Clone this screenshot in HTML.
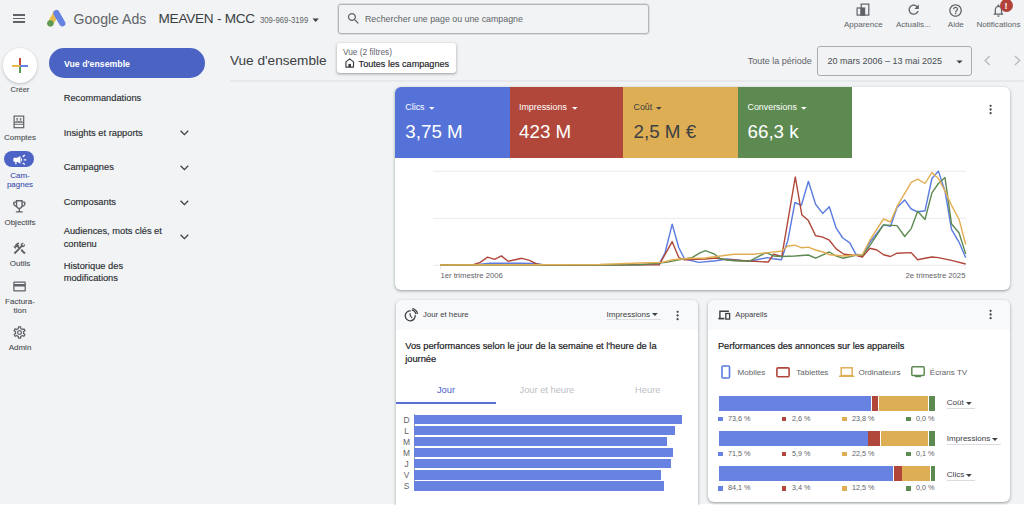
<!DOCTYPE html>
<html><head><meta charset="utf-8">
<style>
*{box-sizing:border-box;margin:0;padding:0}
html,body{width:1024px;height:505px;overflow:hidden;background:#f1f3f4;font-family:"Liberation Sans",sans-serif;color:#3c4043}
.a{position:absolute;white-space:nowrap;line-height:1}
.card{position:absolute;background:#fff;border-radius:6px;box-shadow:0 1px 2px rgba(60,64,67,.3),0 1px 3px 1px rgba(60,64,67,.15)}
svg{position:absolute;overflow:visible}
.nav{font-size:9.3px;color:#2b2e32;-webkit-text-stroke:0.15px #2b2e32}
.side{font-size:8px;color:#4a4e53;-webkit-text-stroke:0.1px #4a4e53;text-align:center;width:40px;left:0}
</style></head><body>
<!-- bottom white strip -->
<div class="a" style="left:0;top:504px;width:1024px;height:1px;background:#fff"></div>

<!-- TOP BAR -->
<div class="a" style="left:13px;top:14px;width:12px;height:1.6px;background:#5f6368"></div>
<div class="a" style="left:13px;top:17.7px;width:12px;height:1.6px;background:#5f6368"></div>
<div class="a" style="left:13px;top:21.4px;width:12px;height:1.6px;background:#5f6368"></div>

<svg style="left:47px;top:9px" width="20" height="18" viewBox="0 0 20 18">
  <line x1="9.4" y1="4.1" x2="3.4" y2="14.3" stroke="#e6bc4e" stroke-width="6" stroke-linecap="round"/>
  <line x1="9.4" y1="4.1" x2="15.3" y2="14.3" stroke="#6382e2" stroke-width="6.2" stroke-linecap="round"/>
  <circle cx="3.4" cy="14.35" r="3.2" fill="#5c9c57"/>
</svg>
<div class="a" style="left:73.5px;top:11.5px;font-size:14.1px;color:#5f6368">Google Ads</div>
<div class="a" style="left:158.5px;top:11.5px;font-size:13.6px;color:#3a3d41;letter-spacing:-0.25px">MEAVEN - MCC</div>
<div class="a" style="left:260.4px;top:15.7px;font-size:8.8px;color:#5f6368;transform:scaleX(.88);transform-origin:0 0">309-969-3199</div>
<svg style="left:312px;top:17.5px" width="8" height="5"><path d="M0.5 0.5 L6.8 0.5 L3.65 4 Z" fill="#3c4043"/></svg>

<!-- search -->
<div class="a" style="left:338.3px;top:3.8px;width:310.5px;height:30.2px;border:1px solid #b3b5b8;border-radius:3px;box-shadow:0 0 0 0.7px rgba(190,192,196,.6)"></div>
<svg style="left:346.0px;top:10.8px" width="15" height="15" viewBox="0 0 24 24"><path d="M15.5 14h-.79l-.28-.27C15.41 12.59 16 11.11 16 9.5 16 5.91 13.09 3 9.5 3S3 5.910 3 9.5 5.91 16 9.5 16c1.61 0 3.09-.59 4.23-1.57l.27.28v.79l5 4.99L20.49 19l-4.99-5zm-6 0C7.01 14 5 11.99 5 9.5S7.01 5 9.5 5 14 7.01 14 9.5 11.99 14 9.5 14z" fill="#5f6368"/></svg>
<div class="a" style="left:364.8px;top:13.5px;font-size:9.8px;color:#5f6368;transform:scaleX(.9);transform-origin:0 0">Rechercher une page ou une campagne</div>

<!-- right icons -->
<svg style="left:855.6px;top:3.4px" width="14" height="13" viewBox="0 0 14 13"><rect x="5.2" y="1.1" width="7.6" height="11" fill="none" stroke="#5f6368" stroke-width="1.2"/><rect x="1.1" y="5" width="4.1" height="7.1" fill="none" stroke="#5f6368" stroke-width="1.2"/><rect x="4.6" y="4.4" width="4.6" height="8.3" fill="#5f6368"/></svg>
<div class="a" style="left:844px;top:20.8px;font-size:8px;color:#5f6368">Apparence</div>
<svg style="left:905.6px;top:2.3px" width="15.4" height="15.4" viewBox="0 0 24 24"><path d="M17.65 6.35C16.2 4.9 14.21 4 12 4c-4.42 0-7.99 3.58-7.99 8s3.57 8 7.99 8c3.73 0 6.84-2.55 7.73-6h-2.08c-.82 2.33-3.04 4-5.65 4-3.31 0-6-2.690-6-6s2.69-6 6-6c1.66 0 3.14.69 4.22 1.78L13 11h7V4l-2.35 2.35z" fill="#5f6368"/></svg>
<div class="a" style="left:896px;top:20.8px;font-size:8px;color:#5f6368">Actualis...</div>
<svg style="left:948.1px;top:2.5px" width="15.1" height="15.1" viewBox="0 0 24 24"><path d="M11 18h2v-2h-2v2zm1-16C6.48 2 2 6.48 2 12s4.48 10 10 10 10-4.48 10-10S17.52 2 12 2zm0 18c-4.41 0-8-3.59-8-8s3.59-8 8-8 8 3.59 8 8-3.59 8-8 8zm0-14c-2.21 0-4 1.79-4 4h2c0-1.1.9-2 2-2s2 .9 2 2c0 2-3 1.75-3 5h2c0-2.25 3-2.5 3-5 0-2.21-1.79-4-4-4z" fill="#5f6368"/></svg>
<div class="a" style="left:947.8px;top:20.8px;font-size:8px;color:#5f6368">Aide</div>
<svg style="left:991.4px;top:2.8px" width="14.9" height="14.9" viewBox="0 0 24 24"><path d="M12 22c1.1 0 2-.9 2-2h-4c0 1.1.89 2 2 2zm6-6v-5c0-3.07-1.64-5.64-4.5-6.32V4c0-.83-.67-1.5-1.5-1.5s-1.5.67-1.5 1.5v.68C7.63 5.36 6 7.92 6 11v5l-2 2v1h16v-1l-2-2zm-2 1H8v-6c0-2.48 1.51-4.5 4-4.5s4 2.02 4 4.5v6z" fill="#5f6368"/></svg>
<div class="a" style="left:999.5px;top:-1px;width:13px;height:13px;border-radius:50%;background:#b3413a"></div>
<div class="a" style="left:999.5px;top:1.5px;width:13px;text-align:center;font-size:9px;font-weight:700;color:#fff">!</div>
<div class="a" style="left:976.4px;top:20.8px;font-size:8.1px;color:#5f6368">Notifications</div>

<!-- SIDEBAR rail -->
<div class="a" style="left:2.6px;top:48.3px;width:34.6px;height:34.6px;border-radius:50%;background:#fff;box-shadow:0 1px 3px rgba(60,64,67,.3)"></div>
<div class="a" style="left:12.1px;top:64.5px;width:8px;height:2.3px;background:#e8b84a"></div>
<div class="a" style="left:20px;top:64.5px;width:7.6px;height:2.3px;background:#6281e3"></div>
<div class="a" style="left:18.8px;top:57.8px;width:2.3px;height:7.2px;background:#c5483d"></div>
<div class="a" style="left:18.8px;top:66.8px;width:2.3px;height:6.3px;background:#5a9a55"></div>
<div class="a side" style="top:86px;font-size:7.5px">Créer</div>

<svg style="left:13.4px;top:115.2px" width="12" height="14" viewBox="0 0 12 14"><rect x="1.1" y="1.1" width="9.6" height="11.6" fill="none" stroke="#5f6368" stroke-width="1.2"/><circle cx="4.2" cy="3.9" r="0.9" fill="#5f6368"/><circle cx="7.6" cy="3.9" r="0.9" fill="#5f6368"/><path d="M2.6 6.6 Q4.2 5.2 5.8 6.6 M6 6.6 Q7.6 5.2 9.2 6.6" fill="none" stroke="#5f6368" stroke-width="1"/><path d="M1.1 7.3 L10.7 7.3 M1.1 9.3 L10.7 9.3" stroke="#5f6368" stroke-width="0.9"/></svg>
<div class="a side" style="top:133.6px">Comptes</div>

<div class="a" style="left:4.4px;top:151.2px;width:29.7px;height:16.3px;border-radius:9px;background:#4d63c6"></div>
<svg style="left:11.6px;top:152.3px" width="15.6" height="15.6" viewBox="0 0 24 24"><path d="M18 11v2h4v-2h-4zm-2 6.61c.96.71 2.21 1.65 3.2 2.39.4-.53.8-1.07 1.2-1.6-.99-.74-2.24-1.68-3.2-2.4-.4.54-.8 1.08-1.2 1.61zM20.4 5.6c-.4-.53-.8-1.07-1.2-1.6-.99.74-2.24 1.68-3.2 2.4.4.53.8 1.07 1.2 1.6.96-.72 2.21-1.65 3.2-2.4zM4 9c-1.1 0-2 .9-2 2v2c0 1.1.9 2 2 2h1v4h2v-4h1l5 3V6L8 9H4zm11.5 3c0-1.33-.58-2.53-1.5-3.35v6.69c.92-.81 1.5-2.01 1.5-3.34z" fill="#fff"/></svg>
<div class="a side" style="top:170.6px;color:#3f51b0;-webkit-text-stroke:0.1px #3f51b0;line-height:9px">Cam-<br>pagnes</div>

<svg style="left:10.9px;top:198.0px" width="16.6" height="16.6" viewBox="0 0 24 24"><path d="M19 5h-2V3H7v2H5c-1.1 0-2 .9-2 2v1c0 2.55 1.92 4.63 4.39 4.94.63 1.5 1.98 2.63 3.61 2.96V19H7v2h10v-2h-4v-3.1c1.63-.33 2.98-1.46 3.61-2.96C19.08 12.63 21 10.55 21 8V7c0-1.1-.9-2-2-2zM5 8V7h2v3.82C5.84 10.4 5 9.3 5 8zm7 6c-1.65 0-3-1.35-3-3V5h6v6c0 1.650-1.35 3-3 3zm7-6c0 1.3-.84 2.4-2 2.82V7h2v1z" fill="#5f6368"/></svg>
<div class="a side" style="top:218.5px">Objectifs</div>

<svg style="left:12.1px;top:240.7px" width="14.9" height="14.9" viewBox="0 0 24 24"><path d="M13.783 15.172l2.121-2.121 5.996 5.996-2.121 2.121zM17.5 10c1.93 0 3.5-1.57 3.5-3.5 0-.58-.16-1.12-.41-1.6l-2.7 2.7-1.49-1.49 2.7-2.7c-.48-.25-1.02-.41-1.6-.41C15.57 3 14 4.57 14 6.5c0 .41.08.8.21 1.16l-1.85 1.850-1.78-1.78.71-.71-1.41-1.41L12 3.49c-1.17-1.17-3.07-1.17-4.24 0L4.22 7.03l1.41 1.41H2.81l-.71.71 3.54 3.54.71-.71V9.150l1.41 1.41.71-.71 1.78 1.78-7.41 7.41 2.12 2.12L16.34 9.79c.36.13.75.21 1.16.21z" fill="#5f6368"/></svg>
<div class="a side" style="top:260.1px">Outils</div>

<svg style="left:11.9px;top:278.6px" width="15.1" height="15.1" viewBox="0 0 24 24"><path d="M20 4H4c-1.11 0-1.99.89-1.99 2L2 18c0 1.11.89 2 2 2h16c1.11 0 2-.89 2-2V6c0-1.11-.89-2-2-2zm0 14H4v-6h16v6zm0-10H4V6h16v2z" fill="#5f6368"/></svg>
<div class="a side" style="top:296.6px;line-height:9px">Factura-<br>tion</div>

<svg style="left:11.9px;top:325.2px" width="15.1" height="15.1" viewBox="0 0 24 24"><path d="M19.43 12.98c.04-.32.07-.64.07-.98 0-.34-.03-.66-.07-.98l2.11-1.65c.19-.15.24-.42.12-.64l-2-3.46c-.09-.16-.26-.25-.44-.25-.06 0-.12.01-.17.03l-2.49 1c-.52-.4-1.08-.73-1.69-.98l-.38-2.65C14.46 2.18 14.25 2 14 2h-4c-.25 0-.46.18-.49.42l-.38 2.65c-.61.25-1.17.59-1.69.98l-2.49-1c-.06-.02-.12-.03-.18-.03-.17 0-.34.09-.43.25l-2 3.46c-.13.22-.07.49.12.64l2.11 1.65c-.04.32-.07.65-.07.98 0 .33.03.66.07.98l-2.11 1.65c-.19.15-.24.42-.12.64l2 3.46c.09.16.26.25.44.25.06 0 .12-.01.17-.03l2.49-1c.52.4 1.08.73 1.69.98l.38 2.65c.03.24.24.42.49.42h4c.25 0 .46-.18.49-.42l.38-2.65c.61-.25 1.17-.59 1.69-.98l2.49 1c.06.02.12.03.18.03.17 0 .34-.09.43-.25l2-3.46c.12-.22.07-.49-.12-.64l-2.11-1.65zm-1.98-1.71c.04.31.05.52.05.73 0 .21-.02.43-.05.73l-.14 1.13.89.7 1.08.84-.7 1.21-1.27-.51-1.04-.42-.9.68c-.43.32-.84.56-1.25.73l-1.060.43-.16 1.13-.2 1.35h-1.4l-.19-1.35-.16-1.13-1.06-.43c-.43-.18-.83-.41-1.23-.71l-.91-.7-1.06.43-1.27.51-.7-1.21 1.08-.84.89-.7-.14-1.13c-.03-.31-.05-.54-.05-.74s.02-.43.05-.73l.14-1.13-.89-.7-1.08-.84.7-1.21 1.27.51 1.04.42.9-.68c.43-.32.84-.56 1.25-.73l1.06-.43.16-1.13.2-1.35h1.39l.19 1.35.16 1.13 1.06.43c.43.18.83.41 1.23.71l.91.7 1.06-.43 1.27-.51.7 1.21-1.07.85-.89.7.14 1.13zM12 8c-2.21 0-4 1.79-4 4s1.79 4 4 4 4-1.79 4-4-1.79-4-4-4zm0 6c-1.1 0-2-.9-2-2s.9-2 2-2 2 .9 2 2-.9 2-2 2z" fill="#5f6368"/></svg>
<div class="a side" style="top:344.3px">Admin</div>

<!-- NAV MENU -->
<div class="a" style="left:48.8px;top:47.9px;width:156.4px;height:29.9px;border-radius:15px;background:#4b64c4"></div>
<div class="a" style="left:64px;top:59.7px;font-size:8.75px;font-weight:700;color:#fff">Vue d'ensemble</div>
<div class="a nav" style="left:63.7px;top:94px">Recommandations</div>
<div class="a nav" style="left:63.7px;top:128.5px">Insights et rapports</div>
<div class="a nav" style="left:63.7px;top:163.3px">Campagnes</div>
<div class="a nav" style="left:63.7px;top:198px">Composants</div>
<div class="a nav" style="left:63.7px;top:225.1px;line-height:12.45px">Audiences, mots clés et<br>contenu</div>
<div class="a nav" style="left:63.7px;top:259.7px;line-height:12.45px">Historique des<br>modifications</div>
<svg style="left:180px;top:130px" width="9" height="6"><path d="M0.6 0.8 L4.4 4.6 L8.2 0.8" fill="none" stroke="#3c4043" stroke-width="1.3"/></svg>
<svg style="left:180px;top:164.8px" width="9" height="6"><path d="M0.6 0.8 L4.4 4.6 L8.2 0.8" fill="none" stroke="#3c4043" stroke-width="1.3"/></svg>
<svg style="left:180px;top:199.5px" width="9" height="6"><path d="M0.6 0.8 L4.4 4.6 L8.2 0.8" fill="none" stroke="#3c4043" stroke-width="1.3"/></svg>
<svg style="left:180.4px;top:234.3px" width="9" height="6"><path d="M0.6 0.8 L4.4 4.6 L8.2 0.8" fill="none" stroke="#3c4043" stroke-width="1.3"/></svg>

<!-- SECOND ROW -->
<div class="a" style="left:230px;top:54px;font-size:13.6px;color:#3c4043">Vue d'ensemble</div>
<div class="card" style="left:337px;top:43.4px;width:118.6px;height:30px;border-radius:3px"></div>
<div class="a" style="left:343px;top:47.5px;font-size:8.3px;color:#5f6368">Vue (2 filtres)</div>
<svg style="left:345px;top:58.3px" width="10" height="10" viewBox="0 0 10 10"><path d="M0.9 9.1 L0.9 3.9 L4.7 0.9 L8.5 3.9 L8.5 9.1 Z" fill="none" stroke="#3c4043" stroke-width="1.2" stroke-linejoin="round"/><rect x="3.4" y="5.9" width="2.6" height="3.2" fill="#3c4043"/></svg>
<div class="a" style="left:358.6px;top:59.5px;font-size:9.1px;color:#202124;-webkit-text-stroke:0.15px #202124">Toutes les campagnes</div>

<div class="a" style="left:747.8px;top:57px;font-size:9px;color:#5f6368">Toute la période</div>
<div class="a" style="left:817px;top:46.3px;width:154.6px;height:29.5px;border:1px solid #a9acb0;border-radius:3px"></div>
<div class="a" style="left:827.4px;top:57px;font-size:9px;color:#4a4e53">20 mars 2006 – 13 mai 2025</div>
<svg style="left:956px;top:60px" width="8" height="5"><path d="M0.4 0.4 L6.6 0.4 L3.5 3.6 Z" fill="#3c4043"/></svg>
<svg style="left:984px;top:55px" width="8" height="12"><path d="M5.8 0.9 L1 5.5 L5.8 10.1" fill="none" stroke="#b9bbbe" stroke-width="1.4"/></svg>
<svg style="left:1013.6px;top:55px" width="8" height="12"><path d="M0.9 0.9 L5.7 5.5 L0.9 10.1" fill="none" stroke="#b9bbbe" stroke-width="1.4"/></svg>
<div class="a" style="left:230px;top:80px;width:794px;height:2px;background:#e7e8eb"></div>

<!-- MAIN CHART CARD -->
<div class="card" style="left:395.2px;top:86.9px;width:615.2px;height:203.4px;overflow:hidden">
  <div class="a" style="left:0;top:0;width:114.6px;height:71.6px;background:#5472d7"></div>
  <div class="a" style="left:114.6px;top:0;width:113.7px;height:71.6px;background:#b0473a"></div>
  <div class="a" style="left:228.3px;top:0;width:114.2px;height:71.6px;background:#ddae54"></div>
  <div class="a" style="left:342.5px;top:0;width:114px;height:71.6px;background:#5d8a51"></div>
</div>
<div class="a" style="left:405.3px;top:103.3px;font-size:8.9px;color:#fff">Clics</div>
<div class="a" style="left:405.3px;top:122.5px;font-size:18.8px;color:#fff">3,75 M</div>
<div class="a" style="left:519px;top:103.3px;font-size:8.9px;color:#fff">Impressions</div>
<div class="a" style="left:519px;top:122.5px;font-size:18.8px;color:#fff">423 M</div>
<div class="a" style="left:633.5px;top:103.3px;font-size:8.9px;color:#3c4043">Coût</div>
<div class="a" style="left:633.5px;top:122.5px;font-size:18.8px;color:#3c4043">2,5 M €</div>
<div class="a" style="left:747.5px;top:103.3px;font-size:8.9px;color:#fff">Conversions</div>
<div class="a" style="left:747.5px;top:122.5px;font-size:18.8px;color:#fff">66,3 k</div>
<svg style="left:429.4px;top:106.6px" width="7" height="4"><path d="M0 0 L5.6 0 L2.8 2.8 Z" fill="#fff"/></svg>
<svg style="left:572px;top:106.6px" width="7" height="4"><path d="M0 0 L5.6 0 L2.8 2.8 Z" fill="#fff"/></svg>
<svg style="left:656px;top:106.6px" width="7" height="4"><path d="M0 0 L5.6 0 L2.8 2.8 Z" fill="#3c4043"/></svg>
<svg style="left:800.5px;top:106.6px" width="7" height="4"><path d="M0 0 L5.6 0 L2.8 2.8 Z" fill="#fff"/></svg>
<svg style="left:988.7px;top:104px" width="4" height="12"><circle cx="1.6" cy="1.8" r="1.15" fill="#45494e"/><circle cx="1.6" cy="5.5" r="1.15" fill="#45494e"/><circle cx="1.6" cy="9.2" r="1.15" fill="#45494e"/></svg>

<!-- chart -->
<svg id="chart" style="left:0;top:0" width="1024" height="505">
  <line x1="433" y1="171.3" x2="966" y2="171.3" stroke="#e8eaed" stroke-width="1"/>
  <line x1="433" y1="218.3" x2="966" y2="218.3" stroke="#e8eaed" stroke-width="1"/>
  <line x1="433" y1="265.3" x2="966" y2="265.3" stroke="#e8eaed" stroke-width="1"/>
  <line x1="440.5" y1="265" x2="440.5" y2="269" stroke="#e3e5e8" stroke-width="1"/>
  <line x1="965.5" y1="265" x2="965.5" y2="269" stroke="#eceef0" stroke-width="1"/>
  <g fill="none" stroke-width="1.4" stroke-linejoin="round">
  <polyline stroke="#5b7be0" points="440,265 478,264.5 490,263.3 520,263.3 535,263.5 545,265 640,264.5 659.2,264 665,253 672.2,224.2 678.8,247.7 684.6,259 698.8,262.4 716,260.8 727,259 742,260.4 751,261 767.4,257.6 773,258.7 781.4,259.8 787.9,240.2 794.9,202.5 801.4,205.3 808.4,181.3 815.6,204.2 822.7,213.4 829.3,206.8 836.2,228.2 842.8,238 849.8,242.8 855.9,254.3 862.4,255.4 869.8,242.3 883.5,224.9 890.5,226.4 897,207.5 904.7,199.9 911.2,209 917.7,211.8 925,210.8 931.9,178.5 938.4,171.1 945,191.1 951.5,229.3 959.1,242.3 965.7,257.6"/>
  <polyline stroke="#b0473a" points="440,265 472.6,265 480.1,262.4 487.6,257.2 494.6,259.4 501.4,255.9 508,261.3 522,258.3 529.5,260.4 536,263.7 541.3,265 659.2,264.8 672.2,241.7 678.8,257.6 684.6,259.8 705,259 716,258 727,259.8 749,261 766,262 768.3,262 773.5,254.3 781.8,256.5 795.3,177 801.8,214.7 808.4,220.6 815.6,235.8 822,236.9 829.3,240.2 836.2,248.9 843.9,254.3 855.9,255.4 862.4,257 869.8,248.2 877,250 883.5,254.8 890.5,256.5 897,253.2 911.2,252.6 917.7,259.8 925,258.2 931.9,257 938.4,257.6 951.5,260.4 965.7,264"/>
  <polyline stroke="#5d8a51" points="440,265 600,265 640,264.8 666,262.4 679,259.8 692,257.6 700,252.8 705.4,250.6 714,253.8 720.6,259 733.7,260.8 749,261.3 766,252.6 774,256 781.8,256.5 794.9,256 808.4,255 815.6,258.2 829.3,252 836.2,256 842.8,258.2 855.9,255.4 862.4,255.4 869.8,245.6 883.5,224.9 897,225.6 904.7,236.5 911.2,228.6 917.7,211.2 925,219.5 931.9,192.9 938.4,183.5 945,177.6 951.5,223.8 959.1,233 965.7,253.9"/>
  <polyline stroke="#e3ae52" points="440,265 600,264.5 640,263 661.8,262.4 672.7,259.8 683.6,258.7 705,258 733.7,254.3 753,254.3 768.5,252.6 781.8,251 787.9,246 794.9,245.2 801.8,247.8 808.4,247.1 815.6,250 823.2,252 829.7,254.8 842.8,256 862.4,254.8 869.8,240.2 883.5,219 890.5,222 897,206.4 911.2,182.4 917.7,179.2 925,183.5 931.9,172.6 938.4,178.5 945,191.1 951.5,205.3 959.1,219.5 965.7,244.5"/>
  </g>
</svg>
<div class="a" style="left:440.4px;top:271.5px;font-size:7.7px;color:#5f6368">1er trimestre 2006</div>
<div class="a" style="left:905.6px;top:271.5px;font-size:7.7px;color:#5f6368">2e trimestre 2025</div>

<!-- JOUR ET HEURE CARD -->
<div class="card" style="left:395.7px;top:300px;width:302.4px;height:230px;overflow:hidden">
  <div class="a" style="left:0;top:0;width:100%;height:29.5px;background:#f8f9fa"></div>
</div>
<svg style="left:404px;top:308px" width="16" height="15" viewBox="0 0 16 15"><path d="M6.6 2.8 A5 5 0 1 0 11.2 7.2" fill="none" stroke="#3c4043" stroke-width="1.3"/><path d="M5.9 5.2 Q5.9 8.6 8.2 9.9" fill="none" stroke="#3c4043" stroke-width="1.2"/><path d="M7.7 2.2 A4.9 4.9 0 0 1 11.9 6.2 M8.4 0.6 A6.7 6.7 0 0 1 13.6 5.8" fill="none" stroke="#3c4043" stroke-width="1.2"/></svg>
<div class="a" style="left:423px;top:311px;font-size:7.75px;color:#3c4043">Jour et heure</div>
<div class="a" style="left:606.6px;top:310.8px;font-size:8.05px;color:#3c4043">Impressions</div>
<svg style="left:652.2px;top:312.7px" width="7" height="4"><path d="M0 0 L5.8 0 L2.9 2.9 Z" fill="#3c4043"/></svg>
<div class="a" style="left:606.6px;top:319px;width:54px;height:1px;background:#dadce0"></div>
<svg style="left:676.3px;top:310.2px" width="4" height="12"><circle cx="1.6" cy="1.8" r="1.15" fill="#45494e"/><circle cx="1.6" cy="5.5" r="1.15" fill="#45494e"/><circle cx="1.6" cy="9.2" r="1.15" fill="#45494e"/></svg>
<div class="a" style="left:405.2px;top:341.6px;font-size:9.3px;color:#202124;-webkit-text-stroke:0.2px #202124">Vos performances selon le jour de la semaine et l'heure de la</div>
<div class="a" style="left:405.2px;top:354.5px;font-size:9.3px;color:#202124;-webkit-text-stroke:0.2px #202124">journée</div>
<div class="a" style="left:436.9px;top:385.8px;font-size:9.3px;color:#4b5fc9">Jour</div>
<div class="a" style="left:519.5px;top:385.8px;font-size:9.3px;color:#bdc1c6">Jour et heure</div>
<div class="a" style="left:635.1px;top:385.8px;font-size:9.3px;color:#bdc1c6">Heure</div>
<div class="a" style="left:395.7px;top:402.4px;width:100.7px;height:2px;background:#5a6fd3"></div>


<div class="a" style="left:414px;top:414.2px;width:0.8px;height:77px;background:#9aa0a6"></div>
<div class="a" style="left:414.2px;top:414.7px;width:267.4px;height:9.4px;background:#6882e2"></div>
<div class="a" style="left:414.2px;top:425.8px;width:260.4px;height:9.4px;background:#6882e2"></div>
<div class="a" style="left:414.2px;top:436.9px;width:252.6px;height:9.4px;background:#6882e2"></div>
<div class="a" style="left:414.2px;top:448px;width:258.6px;height:9.4px;background:#6882e2"></div>
<div class="a" style="left:414.2px;top:459.1px;width:256.8px;height:9.4px;background:#6882e2"></div>
<div class="a" style="left:414.2px;top:470.2px;width:246.5px;height:9.4px;background:#6882e2"></div>
<div class="a" style="left:414.2px;top:481.3px;width:250.2px;height:9.4px;background:#6882e2"></div>
<div class="a" style="left:401.5px;top:414.5px;width:10px;text-align:center;font-size:8.4px;color:#5f6368;line-height:11.1px">D<br>L<br>M<br>M<br>J<br>V<br>S</div>

<!-- APPAREILS CARD -->
<div class="card" style="left:707.9px;top:300.3px;width:302.3px;height:201.7px;overflow:hidden">
  <div class="a" style="left:0;top:0;width:100%;height:29.5px;background:#f8f9fa"></div>
</div>
<svg style="left:717.5px;top:309.6px" width="13" height="10" viewBox="0 0 13 10"><path d="M1.9 8.2 L1.9 1.3 L10.9 1.3" fill="none" stroke="#3c4043" stroke-width="1.4"/><path d="M0.4 8.6 L6.4 8.6" stroke="#3c4043" stroke-width="1.7"/><rect x="7.8" y="3.5" width="3.8" height="5.6" fill="none" stroke="#3c4043" stroke-width="1.3"/></svg>
<div class="a" style="left:735.3px;top:311px;font-size:7.7px;color:#3c4043">Appareils</div>
<svg style="left:988.8px;top:309.2px" width="4" height="12"><circle cx="1.6" cy="1.8" r="1.15" fill="#45494e"/><circle cx="1.6" cy="5.5" r="1.15" fill="#45494e"/><circle cx="1.6" cy="9.2" r="1.15" fill="#45494e"/></svg>
<div class="a" style="left:717.9px;top:341.6px;font-size:9.2px;color:#202124;-webkit-text-stroke:0.2px #202124">Performances des annonces sur les appareils</div>

<svg style="left:720.5px;top:364.5px" width="10" height="14"><rect x="1" y="1" width="7.5" height="12" rx="1" fill="none" stroke="#5b7be0" stroke-width="1.6"/></svg>
<div class="a" style="left:737.6px;top:368.5px;font-size:8.05px;color:#5f6368">Mobiles</div>
<svg style="left:776px;top:366.5px" width="15" height="11"><rect x="0.9" y="0.9" width="12.2" height="8.8" rx="1" fill="none" stroke="#b0473a" stroke-width="1.6"/></svg>
<div class="a" style="left:796.2px;top:368.5px;font-size:8.05px;color:#5f6368">Tablettes</div>
<svg style="left:838.5px;top:367px" width="16" height="11"><rect x="2.2" y="0.8" width="11" height="7.8" fill="none" stroke="#ddae54" stroke-width="1.5"/><rect x="0" y="8.6" width="15.4" height="1.4" fill="#ddae54"/></svg>
<div class="a" style="left:858.4px;top:368.5px;font-size:8.05px;color:#5f6368">Ordinateurs</div>
<svg style="left:910.5px;top:366px" width="15" height="12"><rect x="0.8" y="0.8" width="12.4" height="8.8" rx="1" fill="none" stroke="#5d8a51" stroke-width="1.5"/><rect x="4" y="10" width="6" height="1.2" fill="#5d8a51"/></svg>
<div class="a" style="left:929.8px;top:368.5px;font-size:8.05px;color:#5f6368">Écrans TV</div>

<!-- stacked bars -->
<div class="a" style="left:718.6px;top:396.4px;height:14.8px;width:216.3px;background:#fff">
  <div class="a" style="left:0;top:0;height:100%;width:152.6px;background:#6882e2"></div>
  <div class="a" style="left:153.1px;top:0;height:100%;width:6.6px;background:#b0473a"></div>
  <div class="a" style="left:160.2px;top:0;height:100%;width:49.3px;background:#ddae54"></div>
  <div class="a" style="left:210px;top:0;height:100%;width:6.3px;background:#5d8a51"></div>
</div>
<div class="a" style="left:718.6px;top:431.4px;height:14.8px;width:216.3px;background:#fff">
  <div class="a" style="left:0;top:0;height:100%;width:149px;background:#6882e2"></div>
  <div class="a" style="left:149.5px;top:0;height:100%;width:12px;background:#b0473a"></div>
  <div class="a" style="left:162px;top:0;height:100%;width:47.5px;background:#ddae54"></div>
  <div class="a" style="left:210px;top:0;height:100%;width:6.3px;background:#5d8a51"></div>
</div>
<div class="a" style="left:718.6px;top:466px;height:14.8px;width:216.3px;background:#fff">
  <div class="a" style="left:0;top:0;height:100%;width:174.7px;background:#6882e2"></div>
  <div class="a" style="left:175.2px;top:0;height:100%;width:8.2px;background:#b0473a"></div>
  <div class="a" style="left:183.9px;top:0;height:100%;width:27.8px;background:#ddae54"></div>
  <div class="a" style="left:212.2px;top:0;height:100%;width:4.1px;background:#5d8a51"></div>
</div>
<div class="a" style="left:718.0px;top:416.6px;width:4.6px;height:4.6px;background:#6882e2"></div>
<div class="a" style="left:727.6px;top:415.1px;font-size:8px;color:#5f6368;transform:scaleX(.9);transform-origin:0 0">73,6 %</div>
<div class="a" style="left:781.6px;top:416.6px;width:4.6px;height:4.6px;background:#b0473a"></div>
<div class="a" style="left:791.8px;top:415.1px;font-size:8px;color:#5f6368;transform:scaleX(.9);transform-origin:0 0">2,6 %</div>
<div class="a" style="left:842.2px;top:416.6px;width:4.6px;height:4.6px;background:#ddae54"></div>
<div class="a" style="left:852.0px;top:415.1px;font-size:8px;color:#5f6368;transform:scaleX(.9);transform-origin:0 0">23,8 %</div>
<div class="a" style="left:906.3px;top:416.6px;width:4.6px;height:4.6px;background:#5d8a51"></div>
<div class="a" style="left:915.8px;top:415.1px;font-size:8px;color:#5f6368;transform:scaleX(.9);transform-origin:0 0">0,0 %</div>
<div class="a" style="left:946.8px;top:398.8px;font-size:8.05px;color:#3c4043">Coût</div>
<svg style="left:966.3px;top:402.3px" width="7" height="4"><path d="M0 0 L5.8 0 L2.9 2.9 Z" fill="#3c4043"/></svg>
<div class="a" style="left:946.8px;top:407.8px;width:27.8px;height:1px;background:#dadce0"></div>
<div class="a" style="left:718.0px;top:451.6px;width:4.6px;height:4.6px;background:#6882e2"></div>
<div class="a" style="left:727.6px;top:449.6px;font-size:8px;color:#5f6368;transform:scaleX(.9);transform-origin:0 0">71,5 %</div>
<div class="a" style="left:781.6px;top:451.6px;width:4.6px;height:4.6px;background:#b0473a"></div>
<div class="a" style="left:791.8px;top:449.6px;font-size:8px;color:#5f6368;transform:scaleX(.9);transform-origin:0 0">5,9 %</div>
<div class="a" style="left:842.2px;top:451.6px;width:4.6px;height:4.6px;background:#ddae54"></div>
<div class="a" style="left:852.0px;top:449.6px;font-size:8px;color:#5f6368;transform:scaleX(.9);transform-origin:0 0">22,5 %</div>
<div class="a" style="left:906.3px;top:451.6px;width:4.6px;height:4.6px;background:#5d8a51"></div>
<div class="a" style="left:915.8px;top:449.6px;font-size:8px;color:#5f6368;transform:scaleX(.9);transform-origin:0 0">0,1 %</div>
<div class="a" style="left:946.8px;top:434.5px;font-size:8.05px;color:#3c4043">Impressions</div>
<svg style="left:992.4px;top:438px" width="7" height="4"><path d="M0 0 L5.8 0 L2.9 2.9 Z" fill="#3c4043"/></svg>
<div class="a" style="left:946.8px;top:444.2px;width:53.9px;height:1px;background:#dadce0"></div>
<div class="a" style="left:718.0px;top:486.20000000000005px;width:4.6px;height:4.6px;background:#6882e2"></div>
<div class="a" style="left:727.6px;top:484.2px;font-size:8px;color:#5f6368;transform:scaleX(.9);transform-origin:0 0">84,1 %</div>
<div class="a" style="left:781.6px;top:486.20000000000005px;width:4.6px;height:4.6px;background:#b0473a"></div>
<div class="a" style="left:791.8px;top:484.2px;font-size:8px;color:#5f6368;transform:scaleX(.9);transform-origin:0 0">3,4 %</div>
<div class="a" style="left:842.2px;top:486.20000000000005px;width:4.6px;height:4.6px;background:#ddae54"></div>
<div class="a" style="left:852.0px;top:484.2px;font-size:8px;color:#5f6368;transform:scaleX(.9);transform-origin:0 0">12,5 %</div>
<div class="a" style="left:906.3px;top:486.20000000000005px;width:4.6px;height:4.6px;background:#5d8a51"></div>
<div class="a" style="left:915.8px;top:484.2px;font-size:8px;color:#5f6368;transform:scaleX(.9);transform-origin:0 0">0,0 %</div>
<div class="a" style="left:946.8px;top:470.8px;font-size:8.05px;color:#3c4043">Clics</div>
<svg style="left:966.3px;top:474.3px" width="7" height="4"><path d="M0 0 L5.8 0 L2.9 2.9 Z" fill="#3c4043"/></svg>
<div class="a" style="left:946.8px;top:480.3px;width:28.5px;height:1px;background:#dadce0"></div>
</body></html>
